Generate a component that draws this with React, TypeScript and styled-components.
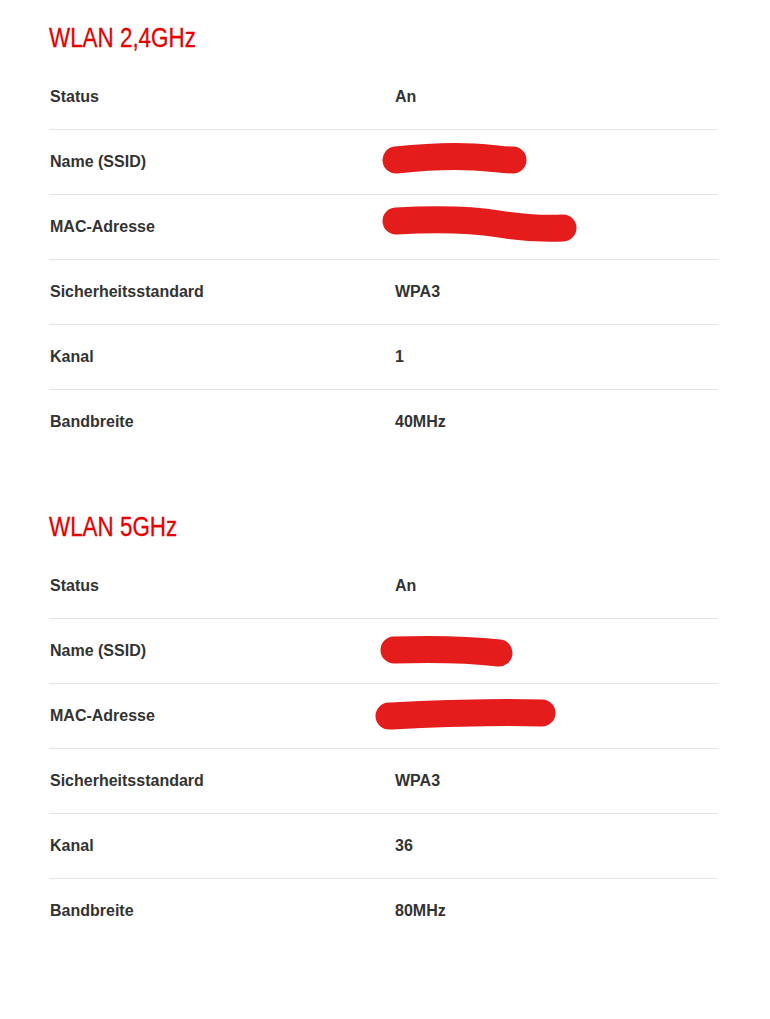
import React from "react";
import styled, { createGlobalStyle } from "styled-components";

const GlobalStyle = createGlobalStyle`
  body {
    margin: 0;
    background: #ffffff;
    font-family: "Liberation Sans", Arial, sans-serif;
  }
`;

const Page = styled.div`
  width: 669px;
  padding: 22px 0 60px 49px;
`;

const Section = styled.section`
  margin-bottom: 57px;
`;

const Title = styled.h2`
  margin: 0 0 11px;
  height: 32px;
  font-size: 28px;
  line-height: 32px;
  font-weight: normal;
  color: #e60000;
  white-space: nowrap;
  transform: scaleX(0.8);
  transform-origin: left center;
  -webkit-text-stroke: 0.3px #e60000;
`;

const Row = styled.div`
  display: grid;
  grid-template-columns: 345px 1fr;
  align-items: center;
  height: 64px;
  border-bottom: 1px solid #e5e5e5;
  &:last-child {
    border-bottom: none;
  }
`;

const Cell = styled.div`
  position: relative;
  padding-left: 1px;
  font-size: 16px;
  font-weight: bold;
  color: #333333;
`;

const Value = styled(Cell)`
  height: 64px;
  display: flex;
  align-items: center;
`;

const Scribble = styled.svg`
  position: absolute;
  left: -20px;
  top: 0;
  width: 220px;
  height: 64px;
  overflow: visible;
`;

type Item = { label: string; value?: string; scribble?: { d: string; w: number } };

const Redaction = ({ d, w }: { d: string; w: number }) => (
  <Scribble viewBox="0 0 220 64">
    <path d={d} fill="none" stroke="#e41c1c" strokeWidth={w} strokeLinecap="round" strokeLinejoin="round" />
  </Scribble>
);

const wlan24: Item[] = [
  { label: "Status", value: "An" },
  { label: "Name (SSID)", scribble: { d: "M22 30 C50 27 80 26 100 27 S128 30 139 30", w: 27 } },
  { label: "MAC-Adresse", scribble: { d: "M22 26 C60 24 100 25 125 29 S168 34 189 33", w: 27 } },
  { label: "Sicherheitsstandard", value: "WPA3" },
  { label: "Kanal", value: "1" },
  { label: "Bandbreite", value: "40MHz" },
];

const wlan5: Item[] = [
  { label: "Status", value: "An" },
  { label: "Name (SSID)", scribble: { d: "M20 31 C50 30 90 30 125 34", w: 27 } },
  { label: "MAC-Adresse", scribble: { d: "M15 32 C60 30 110 27 168 29", w: 27 } },
  { label: "Sicherheitsstandard", value: "WPA3" },
  { label: "Kanal", value: "36" },
  { label: "Bandbreite", value: "80MHz" },
];

const Block = ({ title, items }: { title: string; items: Item[] }) => (
  <Section>
    <Title>{title}</Title>
    {items.map((it) => (
      <Row key={it.label}>
        <Cell>{it.label}</Cell>
        <Value>
          {it.value}
          {it.scribble && <Redaction d={it.scribble.d} w={it.scribble.w} />}
        </Value>
      </Row>
    ))}
  </Section>
);

export default function App() {
  return (
    <>
      <GlobalStyle />
      <Page>
        <Block title="WLAN 2,4GHz" items={wlan24} />
        <Block title="WLAN 5GHz" items={wlan5} />
      </Page>
    </>
  );
}
